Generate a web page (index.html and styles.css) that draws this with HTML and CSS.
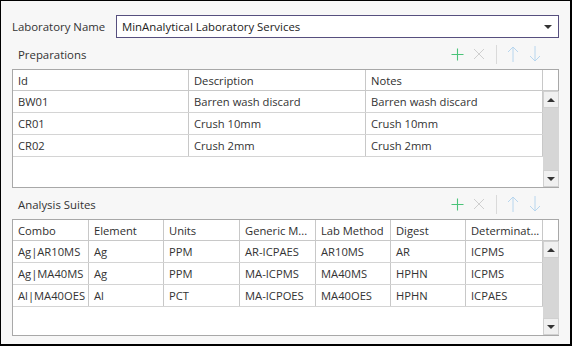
FILE: index.html
```html
<!DOCTYPE html>
<html lang="en">
<head>
  <meta charset="UTF-8">
  <title>Laboratory</title>
  <link rel="stylesheet" href="styles.css">
</head>
<body>
  <div class="window">

    <!-- Laboratory picker -->
    <div class="lab-row">
      <span class="lab-label">Laboratory Name</span>
      <div class="combo">
        <span>MinAnalytical Laboratory Services</span>
        <span class="combo-arrow"></span>
      </div>
    </div>

    <!-- Preparations -->
    <div class="section-head">
      <span class="section-title">Preparations</span>
      <div class="toolbar">
        <span class="tool"><svg width="13" height="13" viewBox="0 0 13 13"><path d="M6.5 0.5v12M0.5 6.5h12" stroke="#4cc47a" stroke-width="1.1" fill="none"/></svg></span>
        <span class="tool"><svg width="12" height="12" viewBox="0 0 12 12"><path d="M1 1l10 10M11 1L1 11" stroke="#cfcfcf" stroke-width="1" fill="none"/></svg></span>
        <span class="tool-sep"></span>
        <span class="tool"><svg width="12" height="16" viewBox="0 0 12 16"><path d="M6 1v15M1 6l5-5 5 5" stroke="#b8d6ee" stroke-width="1" fill="none"/></svg></span>
        <span class="tool"><svg width="12" height="16" viewBox="0 0 12 16"><path d="M6 0v15M1 10l5 5 5-5" stroke="#b8d6ee" stroke-width="1" fill="none"/></svg></span>
      </div>
    </div>

    <div class="grid prep">
      <div class="grid-head">
        <div class="cell">Id</div>
        <div class="cell">Description</div>
        <div class="cell">Notes</div>
        <div class="cell scroll-head"></div>
      </div>
      <div class="grid-body">
        <div class="rows">
          <div class="row"><div class="cell">BW01</div><div class="cell">Barren wash discard</div><div class="cell">Barren wash discard</div></div>
          <div class="row"><div class="cell">CR01</div><div class="cell">Crush 10mm</div><div class="cell">Crush 10mm</div></div>
          <div class="row"><div class="cell">CR02</div><div class="cell">Crush 2mm</div><div class="cell">Crush 2mm</div></div>
        </div>
        <div class="scrollbar">
          <span class="scroll-btn"><span class="tri-up"></span></span>
          <span class="scroll-btn"><span class="tri-down"></span></span>
        </div>
      </div>
    </div>

    <!-- Analysis Suites -->
    <div class="section-head suites-head">
      <span class="section-title">Analysis Suites</span>
      <div class="toolbar">
        <span class="tool"><svg width="13" height="13" viewBox="0 0 13 13"><path d="M6.5 0.5v12M0.5 6.5h12" stroke="#4cc47a" stroke-width="1.1" fill="none"/></svg></span>
        <span class="tool"><svg width="12" height="12" viewBox="0 0 12 12"><path d="M1 1l10 10M11 1L1 11" stroke="#cfcfcf" stroke-width="1" fill="none"/></svg></span>
        <span class="tool-sep"></span>
        <span class="tool"><svg width="12" height="16" viewBox="0 0 12 16"><path d="M6 1v15M1 6l5-5 5 5" stroke="#b8d6ee" stroke-width="1" fill="none"/></svg></span>
        <span class="tool"><svg width="12" height="16" viewBox="0 0 12 16"><path d="M6 0v15M1 10l5 5 5-5" stroke="#b8d6ee" stroke-width="1" fill="none"/></svg></span>
      </div>
    </div>

    <div class="grid suites">
      <div class="grid-head">
        <div class="cell">Combo</div>
        <div class="cell">Element</div>
        <div class="cell">Units</div>
        <div class="cell">Generic M...</div>
        <div class="cell">Lab Method</div>
        <div class="cell">Digest</div>
        <div class="cell">Determinat...</div>
        <div class="cell scroll-head"></div>
      </div>
      <div class="grid-body">
        <div class="rows">
          <div class="row"><div class="cell">Ag|AR10MS</div><div class="cell">Ag</div><div class="cell">PPM</div><div class="cell">AR-ICPAES</div><div class="cell">AR10MS</div><div class="cell">AR</div><div class="cell">ICPMS</div></div>
          <div class="row"><div class="cell">Ag|MA40MS</div><div class="cell">Ag</div><div class="cell">PPM</div><div class="cell">MA-ICPMS</div><div class="cell">MA40MS</div><div class="cell">HPHN</div><div class="cell">ICPMS</div></div>
          <div class="row"><div class="cell">Al|MA40OES</div><div class="cell">Al</div><div class="cell">PCT</div><div class="cell">MA-ICPOES</div><div class="cell">MA40OES</div><div class="cell">HPHN</div><div class="cell">ICPAES</div></div>
        </div>
        <div class="scrollbar">
          <span class="scroll-btn"><span class="tri-up"></span></span>
          <span class="scroll-btn"><span class="tri-down"></span></span>
        </div>
      </div>
    </div>

  </div>
</body>
</html>
```

FILE: styles.css
```css
/* General */
body {
  margin: 0;
  font-family: 'Open Sans', sans-serif;
  font-size: 11.2px;
  color: #333;
}

.window {
  box-sizing: border-box;
  width: 572px;
  height: 346px;
  background: #f7f7f7;
  border: 1px solid #000;
  border-right-width: 2px;
  border-bottom-width: 2px;
  padding: 14px 11px 0 11px;
}

/* Laboratory picker */
.lab-row {
  display: flex;
  align-items: center;
  height: 23px;
}

.lab-label {
  width: 104px;
  font-size: 11.4px;
}

.combo {
  box-sizing: border-box;
  flex: 1;
  height: 23px;
  border: 1px solid #564f7e;
  background: #fff;
  display: flex;
  align-items: center;
  justify-content: space-between;
  padding: 0 6px 0 5px;
  color: #222;
  font-size: 11.4px;
}

.combo-arrow {
  width: 0;
  height: 0;
  border-left: 4px solid transparent;
  border-right: 4px solid transparent;
  border-top: 4px solid #333;
}

/* Section header with toolbar */
.section-head {
  display: flex;
  align-items: center;
  justify-content: space-between;
  height: 22px;
  margin-top: 5px;
  padding-left: 6px;
  margin-bottom: 4px;
}

.section-title {
  font-size: 11.4px;
}

.toolbar {
  display: flex;
  align-items: center;
  margin-right: 13px;
}

.tool {
  width: 22px;
  height: 22px;
  display: flex;
  align-items: center;
  justify-content: center;
}

.tool-sep {
  width: 1px;
  height: 19px;
  background: #dadada;
  margin: 0 5px 0 6px;
}

/* Grids */
.grid {
  border: 1px solid #a8a8a8;
  background: #fff;
}

.grid-head,
.row {
  display: grid;
}

.grid-head {
  height: 20px;
  border-bottom: 1px solid #c8c8c8;
}

.prep .grid-head { grid-template-columns: 176px 177px 177px 16px; }
.prep .row { grid-template-columns: 176px 177px 177px; }
.suites .grid-head { grid-template-columns: 76px 75px 76px 76px 75px 75px 77px 16px; }
.suites .row { grid-template-columns: 76px 75px 76px 76px 75px 75px 77px; }

.cell {
  box-sizing: border-box;
  border-right: 1px solid #c8c8c8;
  padding-left: 5px;
  display: flex;
  align-items: center;
  white-space: nowrap;
  overflow: hidden;
}

.grid-head .cell {
  color: #2e2e2e;
}

.scroll-head {
  border-right: none;
}

.grid-body {
  display: flex;
}

.prep .grid-body { height: 96px; }
.suites .grid-body { height: 94px; }

.rows {
  flex: 1;
}

.row {
  height: 21px;
  border-bottom: 1px solid #d4d4d4;
}

/* Scrollbar */
.scrollbar {
  width: 16px;
  background: #d6d6d6;
  display: flex;
  flex-direction: column;
  justify-content: space-between;
}

.scroll-btn {
  box-sizing: border-box;
  width: 16px;
  height: 17px;
  background: #f0f0f0;
  border: 1px solid #d0d0d0;
  display: flex;
  align-items: center;
  justify-content: center;
}

.tri-up,
.tri-down {
  width: 0;
  height: 0;
  border-left: 4px solid transparent;
  border-right: 4px solid transparent;
}

.tri-up { border-bottom: 4px solid #333; }
.tri-down { border-top: 4px solid #333; }
```
